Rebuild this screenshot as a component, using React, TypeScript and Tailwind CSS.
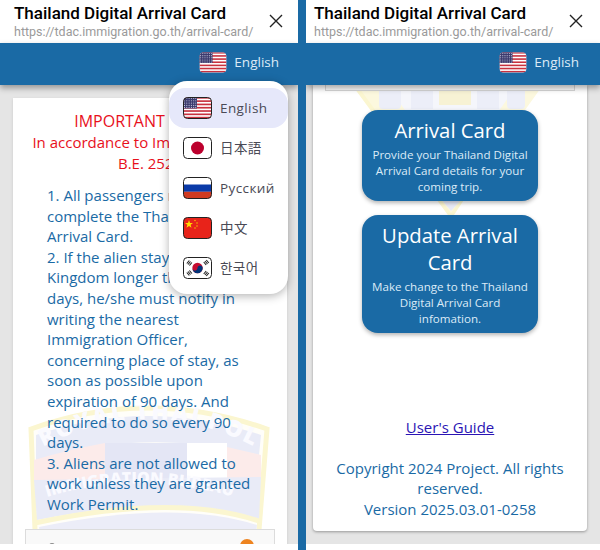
import React from 'react';

const sans = "font-['Open_Sans','Noto_Sans_CJK_JP',sans-serif]";

const UsFlag = ({ border = false }: { border?: boolean }) => (
  <svg viewBox="0 0 29 22" className="w-full h-full block">
    <defs>
      <clipPath id={border ? 'usb' : 'usn'}>
        <rect x="0.5" y="0.5" width="28" height="21" rx="4" />
      </clipPath>
    </defs>
    <g clipPath={`url(#${border ? 'usb' : 'usn'})`}>
      <rect width="29" height="22" fill="#fff" />
      {[0, 1, 2, 3, 4, 5, 6].map((i) => (
        <rect key={i} y={i * 3.3} width="29" height="1.65" fill="#c8313e" />
      ))}
      <rect width="14" height="11.5" fill="#3c3b6e" />
      {[1.5, 3.8, 6.1, 8.4, 10.4].map((y) =>
        [1.5, 3.8, 6.1, 8.4, 10.7, 12.8].map((x) => (
          <circle key={`${x}-${y}`} cx={x} cy={y} r="0.55" fill="#c9cbe0" />
        ))
      )}
    </g>
    {border && <rect x="0.5" y="0.5" width="28" height="21" rx="4" fill="none" stroke="#222" />}
  </svg>
);

const JpFlag = () => (
  <svg viewBox="0 0 29 22" className="w-full h-full block">
    <rect x="0.5" y="0.5" width="28" height="21" rx="4" fill="#fff" stroke="#222" />
    <circle cx="14.5" cy="11" r="6.5" fill="#bc002d" />
  </svg>
);

const RuFlag = () => (
  <svg viewBox="0 0 29 22" className="w-full h-full block">
    <clipPath id="ru">
      <rect x="0.5" y="0.5" width="28" height="21" rx="4" />
    </clipPath>
    <g clipPath="url(#ru)">
      <rect width="29" height="7.5" fill="#fff" />
      <rect y="7.5" width="29" height="7.3" fill="#0a3aa8" />
      <rect y="14.8" width="29" height="7.2" fill="#d03a20" />
    </g>
    <rect x="0.5" y="0.5" width="28" height="21" rx="4" fill="none" stroke="#222" />
  </svg>
);

const CnFlag = () => (
  <svg viewBox="0 0 29 22" className="w-full h-full block">
    <rect x="0.5" y="0.5" width="28" height="21" rx="4" fill="#e8231a" stroke="#222" />
    <polygon points="6,3 7,6 10,6 7.6,7.8 8.5,10.8 6,9 3.5,10.8 4.4,7.8 2,6 5,6" fill="#ffde00" />
    <circle cx="12" cy="3.5" r="0.8" fill="#f7b500" />
    <circle cx="14" cy="6" r="0.8" fill="#f7b500" />
    <circle cx="14" cy="9" r="0.8" fill="#f7b500" />
    <circle cx="12" cy="11" r="0.8" fill="#f7b500" />
  </svg>
);

const KrFlag = () => (
  <svg viewBox="0 0 29 22" className="w-full h-full block">
    <rect x="0.5" y="0.5" width="28" height="21" rx="4" fill="#fff" stroke="#222" />
    <circle cx="14.5" cy="11" r="5.2" fill="#c60c30" />
    <path d="M9.3 11a5.2 5.2 0 0 0 10.4 0c0-1.4-1.2-2.6-2.6-2.6s-2.6 1.2-2.6 2.6-1.2 2.6-2.6 2.6-2.6-1.2-2.6-2.6z" fill="#003478" />
    <g stroke="#222" strokeWidth="1.1">
      <path d="M5 7.5l2.5-3M6.4 8.5l2.5-3M3.8 6.5l2.5-3" />
      <path d="M22 4l2.5 3M20.7 5l2.5 3M23.3 3l2.5 3" />
      <path d="M5 14.5l2.5 3M6.4 13.5l2.5 3M3.8 15.5l2.5 3" />
      <path d="M22 18l2.5-3M20.7 17l2.5-3M23.3 19l2.5-3" />
    </g>
  </svg>
);

// faded police crest behind the card text
const Crest = ({ id }: { id: string }) => (
  <svg viewBox="0 0 243 300" className="w-[243px] h-[300px] block">
    <defs>
      <path id={`${id}-top`} d="M16 42 Q120 -14 228 42" />
      <path id={`${id}-bot`} d="M20 92 Q120 62 226 98" />
    </defs>
    <path d="M4 24 Q120 -18 240 24 L232 125 L210 170 L124 300 L28 170 L8 125 Z" fill="#fffef9" stroke="#fbf6d0" strokeWidth="5" />
    <path d="M9 30 Q120 -8 234 30 L232 50 Q120 22 9 55 Z" fill="#e9ebf7" />
    <path d="M7 55 Q40 45 78 38 L78 75 L7 75 Z" fill="#fcebea" />
    <rect x="78" y="38" width="82" height="37" fill="#e4e6f5" />
    <rect x="160" y="38" width="40" height="37" fill="#ffffff" />
    <path d="M200 42 L234 50 L234 75 L200 75 Z" fill="#fcebea" />
    <path d="M7 75 L234 72 L232 115 Q148 88 10 115 Z" fill="#e9ebf7" />
    <path d="M8 118 Q148 88 232 116" fill="none" stroke="#fbf6d0" strokeWidth="5" />
    <path d="M12 122 Q148 94 230 120 L226 150 L16 150 Z" fill="#ecedf8" />
    <text fontFamily="'Open Sans',sans-serif" fontWeight="800" fontSize="23" letterSpacing="2" fill="#fafaff">
      <textPath href={`#${id}-top`}>ROYAL THAI POLICE</textPath>
    </text>
    <text fontFamily="'Open Sans',sans-serif" fontWeight="800" fontSize="16" fill="#fafaff">
      <textPath href={`#${id}-bot`}>IMMIGRATION BUREAU</textPath>
    </text>
    <path d="M34 170 L214 170 L124 296 Z" fill="#f5f6fb" />
    <path d="M30 170 L60 170 L126 262 L190 170 L216 170 L124 298 Z" fill="#fcf8de" />
    <g fill="#eceef8">
      <rect x="52" y="172" width="22" height="22" rx="4" />
      <rect x="84" y="170" width="22" height="24" />
      <rect x="112" y="170" width="32" height="20" fill="#f7f2d4" />
      <rect x="150" y="170" width="22" height="24" />
      <rect x="180" y="172" width="18" height="22" rx="4" />
    </g>
    <path d="M100 268 L150 268 L124 296 Z" fill="#e9ebf7" />
  </svg>
);

const Header = ({ left, right, langRight }: { left: string; right: string; langRight: string }) => (
  <>
    <div className={`h-[43px] bg-white flex items-start justify-between shrink-0 ${left} ${right}`}>
      <div className="font-['Roboto',sans-serif]">
        <div className="text-[17px] leading-[18px] mt-[4px] font-medium text-black whitespace-nowrap">
          Thailand Digital Arrival Card
        </div>
        <div className="text-[12.5px] leading-[15px] mt-[2px] text-[#9a9a9a] whitespace-nowrap">
          https://tdac.immigration.go.th/arrival-card/
        </div>
      </div>
      <svg viewBox="0 0 14 14" className="w-[14px] h-[14px] mt-[14px]" fill="none" stroke="#222" strokeWidth="1.4">
        <path d="M1 1l12 12M13 1L1 13" />
      </svg>
    </div>
    <div className={`relative z-10 h-[42px] shrink-0 bg-[#1a6aa5] shadow-[0_3px_6px_rgba(0,0,0,0.35)] flex items-center justify-end pb-[4px] gap-[7px] ${langRight}`}>
      <div className="w-[28px] h-[21px]">
        <UsFlag />
      </div>
      <span className={`${sans} text-[13.5px] text-[#dcebf7]`}>English</span>
    </div>
  </>
);

const languages = [
  { label: 'English', flag: <UsFlag border /> },
  { label: '日本語', flag: <JpFlag /> },
  { label: 'Русский', flag: <RuFlag /> },
  { label: '中文', flag: <CnFlag /> },
  { label: '한국어', flag: <KrFlag /> },
];

const LangMenu = () => (
  <div className="absolute z-20 left-[169px] top-[81px] w-[119px] h-[213px] bg-white rounded-[18px] shadow-[0_2px_10px_rgba(0,0,0,0.3)] pt-[7px]">
    {languages.map((lang, i) => (
      <div
        key={lang.label}
        className={`h-[40px] flex items-center pl-[14px] gap-[8px] rounded-[16px] ${i === 0 ? 'bg-[#e6e8fa]' : ''}`}
      >
        <div className="w-[29px] h-[22px] shrink-0">{lang.flag}</div>
        <span className={`${sans} text-[13.5px] tracking-[0.4px] text-[#4a4a55]`}>{lang.label}</span>
      </div>
    ))}
  </div>
);

const ActionButton = ({ title, desc }: { title: string; desc: string }) => (
  <div className="w-[176px] bg-[#1a6aa5] rounded-[16px] shadow-[0_2px_4px_rgba(0,0,0,0.3)] px-[8px] pt-[7px] pb-[6px] text-center">
    <div className="text-[20.3px] leading-[27px] text-white">{title}</div>
    <div className="text-[11.6px] leading-[16px] mt-[3px] text-[#dcebf7]">{desc}</div>
  </div>
);

const LeftPhone = () => (
  <div className="relative w-[298px] h-[550px] flex flex-col overflow-hidden shrink-0">
    <Header left="pl-[14px]" right="pr-[15px]" langRight="pr-[19px]" />
    <div className="flex-1 bg-[#e5e5e5] pl-[13px] pr-[11px] pt-[13px] overflow-hidden">
      <div className={`${sans} relative h-[460px] bg-white shadow-sm overflow-hidden`}>
        <div className="absolute left-[14px] top-[307px]">
          <Crest id="l" />
        </div>
        <div className="relative">
          <div className="pt-[13px] text-center text-[#e8101c] text-[15px] leading-[21px] px-[12px]">
            <div className="text-[16px]">IMPORTANT NOTICE</div>
            <div>In accordance to Immigration Act,</div>
            <div>B.E. 2522</div>
          </div>
          <div className="pl-[34px] pr-[35px] mt-[11px] text-[15px] leading-[20.6px] text-[#1a6aa5]">
            <div>1. All passengers must complete the Thailand Digital Arrival Card.</div>
            <div>
              2. If the alien stays in the Kingdom longer than 90 days, he/she must notify in writing the nearest Immigration Officer, concerning place of stay, as soon as possible upon expiration of 90 days. And required to do so every 90 days.
            </div>
            <div>3. Aliens are not allowed to work unless they are granted Work Permit.</div>
          </div>
        </div>
        <div className="absolute left-[12px] top-[431px] w-[250px] h-[40px] bg-[#f9f9f9] border border-[#dcdcdc]">
          <div className="absolute left-[23px] top-[13px] w-[6px] h-[6px] rounded-full bg-[#8a8a8a]" />
          <div className="absolute left-[214px] top-[9px] w-[14px] h-[14px] rounded-full bg-[#ee8420]" />
        </div>
      </div>
    </div>
    <div className="h-[6px] bg-white shrink-0" />
    <LangMenu />
  </div>
);

const RightPhone = () => (
  <div className="w-[294px] h-[550px] flex flex-col overflow-hidden shrink-0">
    <Header left="pl-[8px]" right="pr-[17px]" langRight="pr-[21px]" />
    <div className="flex-1 bg-[#e5e5e5] pl-[7px] pr-[13px] overflow-hidden">
      <div className={`${sans} relative h-[446px] bg-white rounded-b-[4px] shadow-[0_1px_3px_rgba(0,0,0,0.35)] overflow-hidden`}>
        <div className="absolute left-[14px] top-[-170px]">
          <Crest id="r" />
        </div>
        <div className="relative flex flex-col items-center">
          <div className="w-[250px] h-[6px] bg-[#fbfbfb] border border-t-0 border-[#d8d8d8]" />
          <div className="h-[19px]" />
          <ActionButton
            title="Arrival Card"
            desc="Provide your Thailand Digital Arrival Card details for your coming trip."
          />
          <div className="h-[14px]" />
          <ActionButton
            title="Update Arrival Card"
            desc="Make change to the Thailand Digital Arrival Card infomation."
          />
          <a className="mt-[83px] text-[15px] leading-[22px] text-[#2a14b4] underline">User's Guide</a>
          <div className="mt-[20px] px-[10px] text-center text-[15px] leading-[20.3px] text-[#1a6aa5]">
            Copyright 2024 Project. All rights reserved.
            <br />
            Version 2025.03.01-0258
          </div>
        </div>
      </div>
    </div>
    <div className="h-[6px] bg-white shrink-0" />
  </div>
);

export default function App() {
  return (
    <div className="w-[600px] h-[550px] flex bg-[#1a6aa5] overflow-hidden">
      <LeftPhone />
      <div className="w-[8px] shrink-0" />
      <RightPhone />
    </div>
  );
}
